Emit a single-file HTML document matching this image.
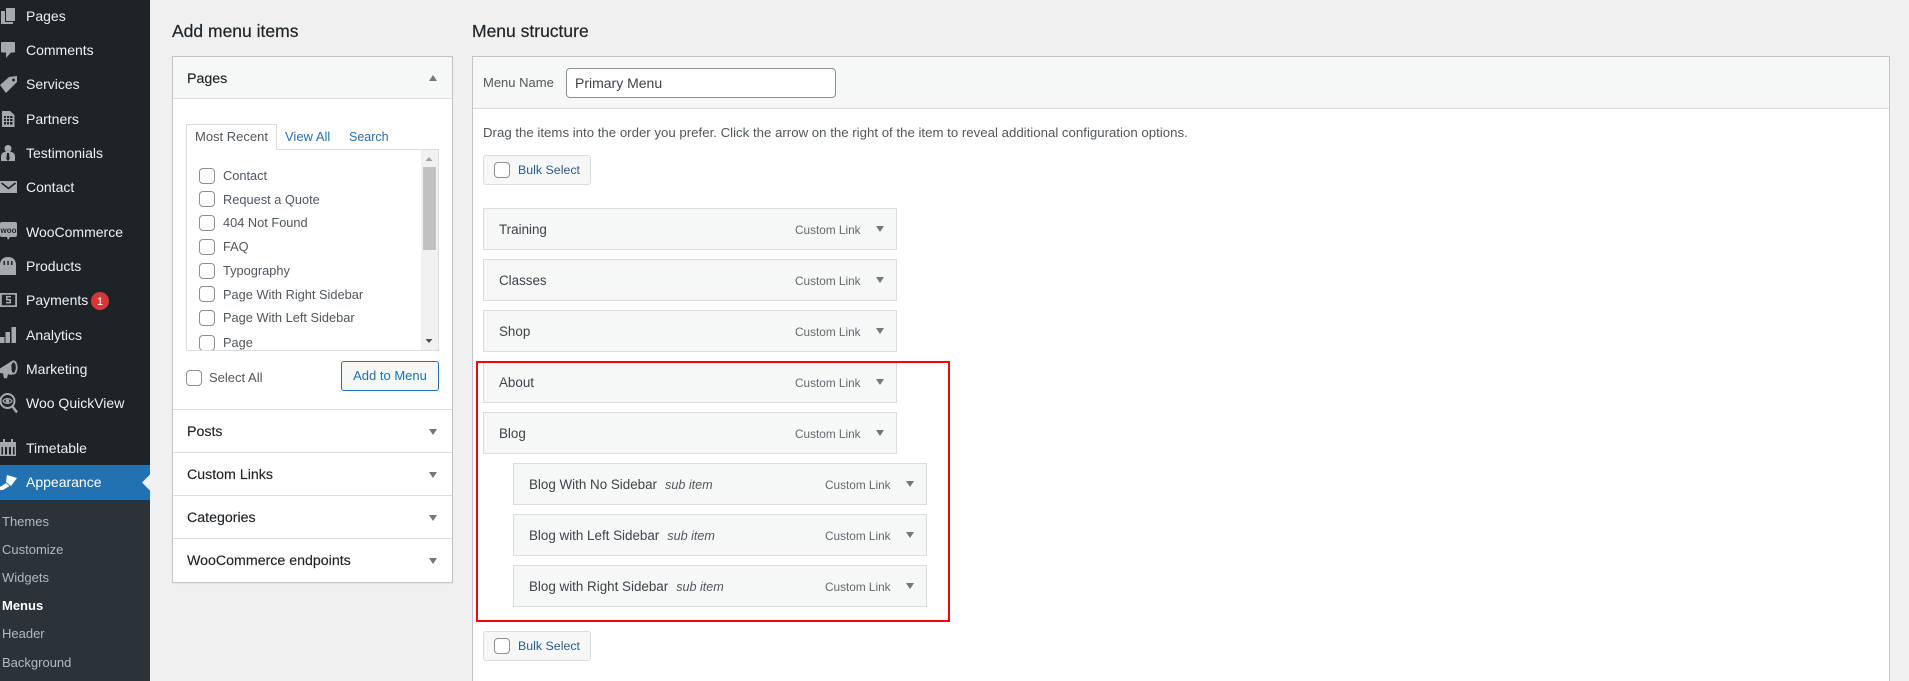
<!DOCTYPE html>
<html>
<head>
<meta charset="utf-8">
<style>
html,body{margin:0;padding:0;width:1909px;height:681px;overflow:hidden;background:#f0f0f1;font-family:"Liberation Sans",Arial,sans-serif;font-size:13px;color:#2c3338}
#w{position:relative;width:1909px;height:681px;overflow:hidden}
.a,.t{position:absolute;box-sizing:border-box}
.t{line-height:20px;height:20px;white-space:nowrap}
.m{color:#f0f0f1;font-size:14px;left:26px}
.s{color:#b4b9be;font-size:13px;left:2px}
.h{font-size:17.5px;color:#1d2327;-webkit-text-stroke:.2px #1d2327}
.pt{font-size:14.2px;color:#1d2327;left:187px;-webkit-text-stroke:.15px #1d2327}
.cb{position:absolute;box-sizing:border-box;width:16px;height:16px;background:#fff;border:1px solid #8c8f94;border-radius:4px}
.l{font-size:12.8px;color:#50575e;left:223px}
.it{position:absolute;box-sizing:border-box;width:414px;height:42px;background:#f6f7f7;border:1px solid #dcdcde}
.n{font-size:13.4px;color:#3c434a}
.n i{font-size:12.6px;color:#50575e;margin-left:8px}
.c{font-size:11.8px;color:#646970}
.line{position:absolute;background:#dcdcde;height:1px}
svg{position:absolute;left:0;top:0}
</style>
</head>
<body>
<div id="w">
<div class="a" style="left:0;top:0;width:150px;height:681px;background:#1d2327"></div>
<div class="a" style="left:0;top:465px;width:150px;height:35px;background:#2271b1"></div>
<div class="a" style="left:0;top:500px;width:150px;height:181px;background:#2c3338"></div>

<div class="t m" style="top:6px">Pages</div>
<div class="t m" style="top:40px">Comments</div>
<div class="t m" style="top:74px">Services</div>
<div class="t m" style="top:109px">Partners</div>
<div class="t m" style="top:143px">Testimonials</div>
<div class="t m" style="top:177px">Contact</div>
<div class="t m" style="top:222px">WooCommerce</div>
<div class="t m" style="top:256px">Products</div>
<div class="t m" style="top:290px">Payments</div>
<div class="t m" style="top:325px">Analytics</div>
<div class="t m" style="top:359px">Marketing</div>
<div class="t m" style="top:393px">Woo QuickView</div>
<div class="t m" style="top:438px">Timetable</div>
<div class="t m" style="top:472px;color:#fff">Appearance</div>
<div class="t s" style="top:512px">Themes</div>
<div class="t s" style="top:540px">Customize</div>
<div class="t s" style="top:568px">Widgets</div>
<div class="t s" style="top:596px;color:#fff;font-weight:700">Menus</div>
<div class="t s" style="top:624px">Header</div>
<div class="t s" style="top:653px">Background</div>

<svg width="1909" height="681" viewBox="0 0 1909 681">
<g fill="#a7aaad">
<!-- pages -->
<path d="M6 8h9v13H6zM1 11h4v11h8v2H1z"/>
<!-- comments -->
<path d="M2 42h12a1 1 0 0 1 1 1v8.500a1 1 0 0 1-1 1h-3L6 58v-5.500H2a1 1 0 0 1-1-1V43a1 1 0 0 1 1-1z"/>
<!-- tag -->
<path fill-rule="evenodd" d="M9 77l8-1v6L6 93l-6-8zM13.500 78.500a1.500 1.500 0 1 0 .01 0z"/>
<!-- partners -->
<path fill-rule="evenodd" d="M2 111h8l4.500 4v12H2zM4 116v2h2v-2zM7 116v2h2v-2zM10 116v2h2.500v-2zM4 119v2h2v-2zM7 119v2h2v-2zM10 119v2h2.500v-2zM4 122v2.500h2V122zM7 122v2.500h2V122zM10 122v2.500h2.500V122z"/>
<!-- person -->
<circle cx="8" cy="148.500" r="3.500"/>
<path d="M1 161v-5c0-3 3-4 5-4.500h4c2 .5 5 1.500 5 4.500v5z"/>
<path fill="#1d2327" d="M7 153h2l.7 6-1.700 2-1.700-2z"/>
<!-- envelope -->
<path d="M0 181h17v12H0z"/>
<path fill="none" stroke="#1d2327" stroke-width="1.600" d="M1.500 183l7 5.500 7-5.500"/>
<!-- woo -->
<path d="M2 222h13a2 2 0 0 1 2 2v11a2 2 0 0 1-2 2h-5l-2 3-1-3H2a2 2 0 0 1-2-2v-11a2 2 0 0 1 2-2z"/>
<!-- products -->
<path fill-rule="evenodd" d="M0 265c0-5 3-8 8-8s8 3 8 8v10H0zM3.500 261v4h1.500v-4zM7.300 261v4h1.500v-4zM11 261v4h1.500v-4z"/>
<!-- payments -->
<path fill-rule="evenodd" d="M0 293h17v14H0zM1.800 294.800v10.400h13.400v-10.400z"/>
<path d="M6 296h5v1.500H7.500v1.500H11v4.500H6V302h3.500v-1.500H6z"/>
<!-- analytics -->
<path d="M0 337h4.500v6H0zM5.500 332H10v11H5.500zM11.500 327H16v16h-4.500z"/>
<!-- marketing -->
<path d="M0 368.500L11 361.500l1 13.500-12-2z"/>
<path d="M3 373.500l5 .8-1 4H4z"/>
<ellipse cx="13.500" cy="367.500" rx="3.200" ry="6.200" fill="none" stroke="#a7aaad" stroke-width="1.800"/>
<!-- quickview -->
<circle cx="7.500" cy="401" r="7" fill="none" stroke="#a7aaad" stroke-width="2"/>
<path fill="none" stroke="#a7aaad" stroke-width="1.200" d="M3 401c2-3.200 7-3.200 9 0-2 3.200-7 3.200-9 0z"/>
<circle cx="7.500" cy="401" r="1.800"/>
<path stroke="#a7aaad" stroke-width="2.500" d="M12.500 406.500l4.500 6"/>
<!-- timetable -->
<path fill-rule="evenodd" d="M0 442h3v-3h2v3h6v-3h2v3h3v14H0zM1.500 447v7.500H3V447zM5 447v7.500h2V447zM9 447v7.500h2V447zM13 447v7.500h1.500V447z"/>
</g>
<text x="8.500" y="233" font-family="Liberation Sans" font-size="8" font-weight="700" fill="#1d2327" text-anchor="middle">woo</text>
<!-- brush -->
<path fill="#fff" d="M7 475l10 3-6 8-5-4z"/>
<path fill="#fff" d="M6 483l3.500 3-6.500 4H0v-3z"/>
<path fill="#f0f0f1" d="M142 482.500l8-8v16z"/>
<circle cx="100" cy="301" r="9" fill="#d63638"/>
<text x="100" y="305" font-family="Liberation Sans" font-size="11" fill="#fff" text-anchor="middle">1</text>
</svg>

<div class="t h" style="left:172px;top:21px">Add menu items</div>
<div class="t h" style="left:472px;top:21px">Menu structure</div>

<!-- left panel -->
<div class="a" style="left:172px;top:56px;width:281px;height:527px;background:#fff;border:1px solid #c3c4c7;box-shadow:0 1px 1px rgba(0,0,0,.05)"></div>
<div class="a" style="left:173px;top:57px;width:279px;height:42px;background:#f6f7f7;border-bottom:1px solid #dcdcde"></div>
<div class="line" style="left:173px;top:409px;width:279px"></div>
<div class="line" style="left:173px;top:452px;width:279px"></div>
<div class="line" style="left:173px;top:495px;width:279px"></div>
<div class="line" style="left:173px;top:538px;width:279px"></div>
<div class="t pt" style="top:69px">Pages</div>
<div class="t pt" style="top:422px">Posts</div>
<div class="t pt" style="top:465px">Custom Links</div>
<div class="t pt" style="top:508px">Categories</div>
<div class="t pt" style="top:551px">WooCommerce endpoints</div>

<!-- tabs/list -->
<div class="a" style="left:186px;top:149px;width:253px;height:202px;border:1px solid #dcdcde;background:#fff;overflow:hidden">
  <div class="a" style="left:234px;top:0;width:17px;height:200px;background:#f1f1f1"></div>
  <div class="a" style="left:236px;top:17px;width:13px;height:83px;background:#c1c1c1"></div>
  <div class="cb" style="left:12px;top:185px"></div>
  <div class="t" style="left:36px;top:183px;color:#50575e;font-size:12.8px">Page</div>
</div>
<div class="a" style="left:186px;top:124px;width:91px;height:26px;background:#fff;border:1px solid #dcdcde;border-bottom:none"></div>
<div class="t" style="left:195px;top:127px;color:#50575e">Most Recent</div>
<div class="t" style="left:285px;top:127px;color:#2271b1">View All</div>
<div class="t" style="left:349px;top:127px;color:#2271b1;font-size:12.5px">Search</div>

<div class="cb" style="left:199px;top:168px"></div><div class="t l" style="top:166px">Contact</div>
<div class="cb" style="left:199px;top:191px"></div><div class="t l" style="top:190px">Request a Quote</div>
<div class="cb" style="left:199px;top:215px"></div><div class="t l" style="top:213px">404 Not Found</div>
<div class="cb" style="left:199px;top:239px"></div><div class="t l" style="top:237px">FAQ</div>
<div class="cb" style="left:199px;top:263px"></div><div class="t l" style="top:261px">Typography</div>
<div class="cb" style="left:199px;top:286px"></div><div class="t l" style="top:285px">Page With Right Sidebar</div>
<div class="cb" style="left:199px;top:310px"></div><div class="t l" style="top:308px">Page With Left Sidebar</div>

<div class="cb" style="left:186px;top:370px"></div>
<div class="t" style="left:209px;top:368px;color:#50575e">Select All</div>
<div class="a t" style="left:341px;top:361px;width:98px;height:30px;line-height:28px;text-align:center;background:#f6f7f7;border:1px solid #2271b1;border-radius:3px;color:#2271b1">Add to Menu</div>

<!-- right panel -->
<div class="a" style="left:472px;top:56px;width:1418px;height:625px;background:#fff;border:1px solid #c3c4c7;border-bottom:0"></div>
<div class="a" style="left:473px;top:57px;width:1416px;height:52px;background:#f6f7f7;border-bottom:1px solid #dcdcde"></div>
<div class="t" style="left:483px;top:73px;color:#50575e">Menu Name</div>
<div class="a t" style="left:566px;top:68px;width:270px;height:30px;line-height:28px;padding-left:8px;background:#fff;border:1px solid #8c8f94;border-radius:4px;font-size:14px;color:#3c434a">Primary Menu</div>
<div class="t" style="left:483px;top:123px;color:#50575e;font-size:13.24px">Drag the items into the order you prefer. Click the arrow on the right of the item to reveal additional configuration options.</div>

<div class="a" style="left:483px;top:155px;width:108px;height:30px;background:#f6f7f7;border:1px solid #dcdcde;border-radius:3px"></div>
<div class="cb" style="left:494px;top:162px"></div>
<div class="t" style="left:518px;top:160px;color:#2c5a85;font-size:12.4px">Bulk Select</div>
<div class="a" style="left:483px;top:631px;width:108px;height:30px;background:#f6f7f7;border:1px solid #dcdcde;border-radius:3px"></div>
<div class="cb" style="left:494px;top:638px"></div>
<div class="t" style="left:518px;top:636px;color:#2c5a85;font-size:12.4px">Bulk Select</div>

<div class="it" style="left:483px;top:208px"></div><div class="t n" style="left:499px;top:220px">Training</div><div class="t c" style="left:795px;top:220px">Custom Link</div>
<div class="it" style="left:483px;top:259px"></div><div class="t n" style="left:499px;top:271px">Classes</div><div class="t c" style="left:795px;top:271px">Custom Link</div>
<div class="it" style="left:483px;top:310px"></div><div class="t n" style="left:499px;top:322px">Shop</div><div class="t c" style="left:795px;top:322px">Custom Link</div>
<div class="it" style="left:483px;top:361px"></div><div class="t n" style="left:499px;top:373px">About</div><div class="t c" style="left:795px;top:373px">Custom Link</div>
<div class="it" style="left:483px;top:412px"></div><div class="t n" style="left:499px;top:424px">Blog</div><div class="t c" style="left:795px;top:424px">Custom Link</div>
<div class="it" style="left:513px;top:463px"></div><div class="t n" style="left:529px;top:475px">Blog With No Sidebar<i>sub item</i></div><div class="t c" style="left:825px;top:475px">Custom Link</div>
<div class="it" style="left:513px;top:514px"></div><div class="t n" style="left:529px;top:526px">Blog with Left Sidebar<i>sub item</i></div><div class="t c" style="left:825px;top:526px">Custom Link</div>
<div class="it" style="left:513px;top:565px"></div><div class="t n" style="left:529px;top:577px">Blog with Right Sidebar<i>sub item</i></div><div class="t c" style="left:825px;top:577px">Custom Link</div>

<div class="a" style="left:476px;top:361px;width:474px;height:261px;border:2px solid #f00"></div>

<svg width="1909" height="681" viewBox="0 0 1909 681">
<g fill="#72777c">
<path d="M429 81l4-6 4 6z"/>
<path d="M429 429l4 6 4-6zM429 472l4 6 4-6zM429 515l4 6 4-6zM429 558l4 6 4-6z"/>
<path d="M876 226l4 6 4-6zM876 277l4 6 4-6zM876 328l4 6 4-6zM876 379l4 6 4-6zM876 430l4 6 4-6zM906 481l4 6 4-6zM906 532l4 6 4-6zM906 583l4 6 4-6z"/>
</g>
<path fill="#a0a0a0" d="M425.500 161l3.500-4 3.500 4z"/>
<path fill="#505050" d="M425.500 339l3.500 4 3.500-4z"/>
</svg>
</div>
</body>
</html>
